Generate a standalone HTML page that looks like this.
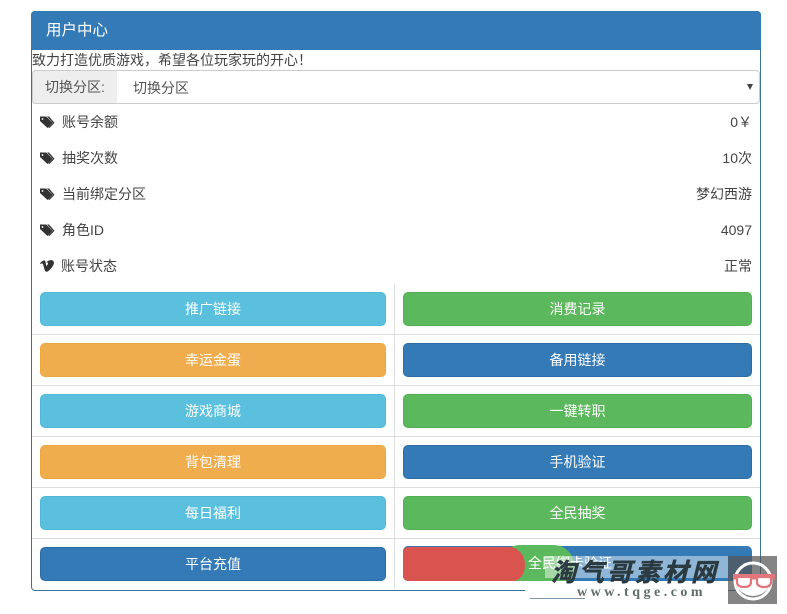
<!DOCTYPE html>
<html lang="zh">
<head>
<meta charset="utf-8">
<style>
html,body{margin:0;padding:0;background:#fff}
body{width:787px;height:614px;position:relative;overflow:hidden;font-family:"Liberation Sans","Noto Sans CJK SC",sans-serif;font-size:14px;color:#444}
.a{position:absolute}
#panel{left:31px;top:11px;width:728px;height:578px;border:1px solid #3f7199;border-radius:4px}
#head{left:31px;top:11px;width:730px;height:39px;background:#337ab7;border-radius:4px 4px 0 0;color:#fff;font-size:15.5px;line-height:39px;text-indent:15px}
#intro{left:32px;top:50px;line-height:20px;white-space:nowrap}
#group{left:32px;top:70px;width:726px;height:32px;border:1px solid #ccc;border-radius:4px;background:#fff}
#addon{left:32px;top:70px;width:85px;height:34px;box-sizing:border-box;border:1px solid #ccc;border-right:0;background:#eee;border-radius:4px 0 0 4px;color:#555;line-height:33px;text-align:center}
#sel{left:133px;top:70px;line-height:36px;color:#555}
#arrow{left:747px;top:84px;width:0;height:0;border-left:3px solid transparent;border-right:3px solid transparent;border-top:6px solid #444}
.l{left:62px;line-height:20px;white-space:nowrap}
.r{right:35px;line-height:20px;white-space:nowrap}
.ic{left:39px}
.b{height:34px;box-sizing:border-box;border-radius:5px;color:#fff;text-align:center;line-height:33px;border:1px solid}
.L{left:40px;width:346px}
.R{left:403px;width:349px}
.info{background:#5bc0de;border-color:#50b9d8}
.warn{background:#f0ad4e;border-color:#eea640}
.ok{background:#5cb85c;border-color:#50b050}
.pri{background:#337ab7;border-color:#2e6da4}
.hr{left:32px;width:728px;height:1px;background:#ddd}
</style>
</head>
<body>
<div class="a" id="panel"></div>
<div class="a" id="head">用户中心</div>
<div class="a" id="intro">致力打造优质游戏，希望各位玩家玩的开心！</div>
<div class="a" id="group"></div>
<div class="a" id="addon">切换分区:</div>
<div class="a" id="sel">切换分区</div>
<div class="a" id="arrow"></div>

<svg class="a ic" style="top:115px" width="16" height="14" viewBox="0 0 16 14"><path d="M1 1.500h6.200l6.300 6.200-5 5.300-7.500-7z" fill="#333"/><path d="M8 1.500h2l5.500 6.200-5 5.300-1.300-.8 4.600-4.500z" fill="#333"/><circle cx="3.500" cy="4" r=".9" fill="#fff"/></svg>
<div class="a l" style="top:112px">账号余额</div>
<div class="a r" style="top:112px">0￥</div>
<svg class="a ic" style="top:151px" width="16" height="14" viewBox="0 0 16 14"><path d="M1 1.500h6.200l6.300 6.200-5 5.300-7.500-7z" fill="#333"/><path d="M8 1.500h2l5.500 6.200-5 5.300-1.300-.8 4.600-4.500z" fill="#333"/><circle cx="3.500" cy="4" r=".9" fill="#fff"/></svg>
<div class="a l" style="top:148px">抽奖次数</div>
<div class="a r" style="top:148px">10次</div>
<svg class="a ic" style="top:187px" width="16" height="14" viewBox="0 0 16 14"><path d="M1 1.500h6.200l6.300 6.200-5 5.300-7.500-7z" fill="#333"/><path d="M8 1.500h2l5.500 6.200-5 5.300-1.300-.8 4.600-4.500z" fill="#333"/><circle cx="3.500" cy="4" r=".9" fill="#fff"/></svg>
<div class="a l" style="top:184px">当前绑定分区</div>
<div class="a r" style="top:184px">梦幻西游</div>
<svg class="a ic" style="top:223px" width="16" height="14" viewBox="0 0 16 14"><path d="M1 1.500h6.200l6.300 6.200-5 5.300-7.500-7z" fill="#333"/><path d="M8 1.500h2l5.500 6.200-5 5.300-1.300-.8 4.600-4.500z" fill="#333"/><circle cx="3.500" cy="4" r=".9" fill="#fff"/></svg>
<div class="a l" style="top:220px">角色ID</div>
<div class="a r" style="top:220px">4097</div>
<svg class="a" style="left:40px;top:260px" width="14" height="12" viewBox="0 0 13 11"><path d="M0 2.800C1.500 1.500 3 0 4.200.4 5.400.8 5.400 4 6 5.600c.5-.6 1.800-2.400 1.400-3-.4-.5-1.100-.3-1.500 0C6.600 1 8.300 0 10.200 0 12.500 0 13.200 1.700 12.800 3.400 12.300 5.800 9 9.800 6.700 10.700 4.800 11.400 4.300 9 3.700 7 3.200 5.400 2.900 3.200 2 3.100 1.600 3.100 1 3.500.7 3.700z" fill="#333"/></svg>
<div class="a l" style="top:256px;left:61px">账号状态</div>
<div class="a r" style="top:256px">正常</div>

<div class="a" style="left:394px;top:284px;width:1px;height:305px;background:#ddd"></div>
<div class="a hr" style="top:334px"></div>
<div class="a hr" style="top:385px"></div>
<div class="a hr" style="top:436px"></div>
<div class="a hr" style="top:487px"></div>
<div class="a hr" style="top:538px"></div>

<div class="a b L info" style="top:292px">推广链接</div>
<div class="a b R ok" style="top:292px">消费记录</div>
<div class="a b L warn" style="top:343px">幸运金蛋</div>
<div class="a b R pri" style="top:343px">备用链接</div>
<div class="a b L info" style="top:394px">游戏商城</div>
<div class="a b R ok" style="top:394px">一键转职</div>
<div class="a b L warn" style="top:445px">背包清理</div>
<div class="a b R pri" style="top:445px">手机验证</div>
<div class="a b L info" style="top:496px">每日福利</div>
<div class="a b R ok" style="top:496px">全民抽奖</div>
<div class="a b L pri" style="top:547px">平台充值</div>

<!-- last right cell: red + green blob + blue -->
<div class="a" style="left:403px;top:546px;width:349px;height:35px;border-radius:5px;background:#337ab7"></div>
<div class="a" style="left:500px;top:545px;width:75px;height:36px;border-radius:20px 22px 6px 0;background:#5cb85c"></div>
<div class="a" style="left:403px;top:547px;width:122px;height:34px;border-radius:5px 16px 12px 5px/5px 18px 16px 5px;background:#d9534f"></div>
<div class="a" style="left:528px;top:553px;color:#fff;line-height:20px;white-space:nowrap">全民绑卡验证</div>

<!-- watermark -->
<div class="a" style="left:545px;top:556px;width:183px;height:22px;background:rgba(255,255,255,.45)"></div>
<div class="a" style="left:525px;top:589px;width:203px;height:12px;background:#fff"></div>
<div class="a" style="left:530px;top:598px;width:55px;height:1px;background:#7f97aa"></div>
<div class="a" style="left:551px;top:558px;width:172px;font-size:25px;line-height:30px;font-weight:700;font-style:italic;color:#2b3a40;-webkit-text-stroke:.5px #2b3a40;white-space:nowrap;letter-spacing:3px">淘气哥素材网</div>
<div class="a" style="left:577px;top:585px;font-family:'Liberation Serif',serif;font-size:14px;font-weight:700;line-height:15px;letter-spacing:3.500px;color:#5f6d66;white-space:nowrap">www.tqge.com</div>
<svg class="a" style="left:728px;top:556px" width="49" height="48" viewBox="0 0 49 48">
<rect width="49" height="48" fill="#555" fill-opacity=".72"/>
<path d="M7 22a18 18 0 0 0 36 0z" fill="#fff"/>
<circle cx="25" cy="25" r="18" fill="none" stroke="#fff" stroke-width="3"/>
<path d="M5 18h42v5.500H5z" fill="#e2777b"/>
<path d="M9 21h14v5c0 3-2 5-7 5s-7-2-7-5zM29 21h14v5c0 3-2 5-7 5s-7-2-7-5z" fill="#fff" stroke="#e2777b" stroke-width="2.200"/>
</svg>
</body>
</html>
